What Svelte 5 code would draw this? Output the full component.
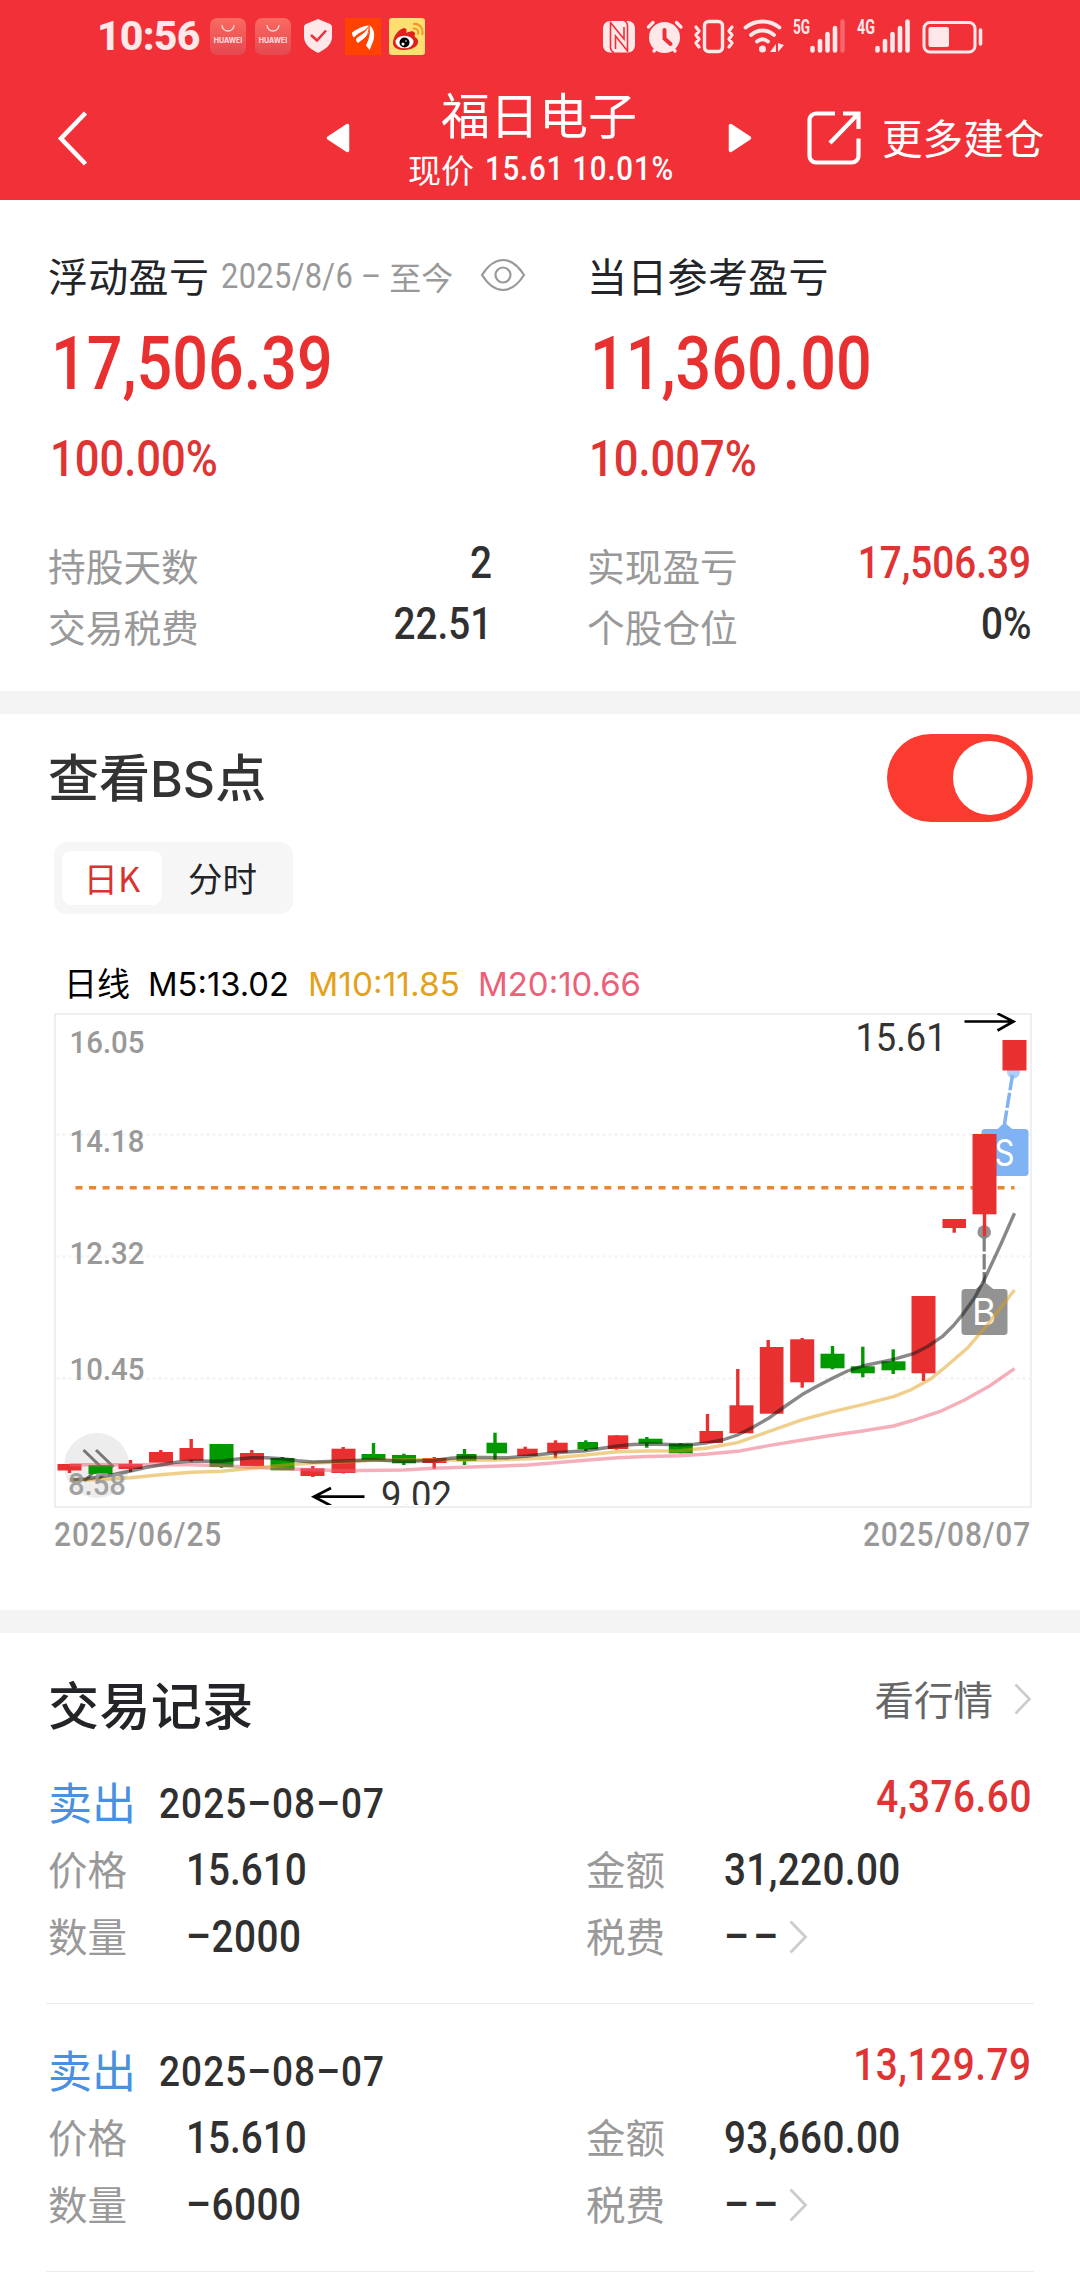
<script>
    let showPoints = true;
    let hidden = false;
    let tab = 'day';

    const left = [
        { label: '持股天数', value: '2' },
        { label: '交易税费', value: '22.51' }
    ];
    const right = [
        { label: '实现盈亏', value: '17,506.39', red: true },
        { label: '个股仓位', value: '0%' }
    ];

    const records = [
        { side: '卖出', date: '2025–08–07', total: '4,376.60', price: '15.610', amount: '31,220.00', count: '–2000' },
        { side: '卖出', date: '2025–08–07', total: '13,129.79', price: '15.610', amount: '93,660.00', count: '–6000' }
    ];

    // wick x, body x, body width, body top, body bottom, wick top, wick bottom, up
    const candles = [
        [69, 57, 24, 1464, 1470.5, 1464, 1473, 1],
        [99.7, 88, 24, 1465, 1474, 1465, 1474, 0],
        [130, 118, 24, 1464, 1469, 1460, 1472, 1],
        [160.3, 148.5, 24, 1452, 1462.7, 1450, 1462, 1],
        [190.7, 179, 24, 1448, 1460.7, 1439, 1461.7, 1],
        [221, 209, 24, 1444, 1467, 1444, 1468, 0],
        [251.3, 239.5, 24, 1453, 1466, 1450, 1466, 1],
        [281.7, 270, 24, 1458, 1470.3, 1457, 1470, 0],
        [312.3, 300, 24, 1468.3, 1476, 1466, 1477, 1],
        [342.7, 331, 24, 1448.7, 1473, 1447, 1473.5, 1],
        [373, 361, 24, 1454, 1460, 1443, 1460, 0],
        [403.3, 391.5, 24, 1455, 1463.3, 1453.7, 1465, 0],
        [433.7, 422, 24, 1458, 1463, 1457, 1468.7, 1],
        [464, 456, 20, 1454, 1461, 1449, 1465, 0],
        [494.5, 486, 20.5, 1442.7, 1453.3, 1432.7, 1460, 0],
        [524.7, 516.7, 20.5, 1448.7, 1456, 1446.7, 1456, 1],
        [555, 546.7, 20.5, 1442.7, 1452.7, 1440.3, 1458, 1],
        [585.3, 577, 20.5, 1442, 1449.3, 1440.3, 1451, 0],
        [616, 607.3, 20.5, 1435.3, 1449, 1435.3, 1449.7, 1],
        [646.3, 638, 24, 1438.7, 1443.7, 1437, 1447.7, 0],
        [680, 668.3, 24, 1443.7, 1453.3, 1443, 1453.3, 0],
        [707, 699, 23.5, 1431, 1443, 1414, 1443, 1],
        [737.3, 729, 24, 1405.3, 1433.3, 1369, 1433, 1],
        [767.7, 759.3, 23.7, 1347, 1413.7, 1340, 1413, 1],
        [801.7, 789.7, 24, 1339.3, 1382.3, 1338, 1387.7, 1],
        [832, 820, 24, 1353.7, 1368.3, 1346, 1369.3, 0],
        [862.3, 850.3, 24, 1366.3, 1373.3, 1346.7, 1377.3, 0],
        [892.7, 881, 24, 1361.3, 1370.3, 1349.3, 1374, 0],
        [923, 911, 24, 1296, 1373.3, 1296, 1381, 1],
        [953.7, 942, 23.5, 1219, 1228, 1219, 1232.7, 1],
        [984, 972, 24, 1134, 1214.3, 1134, 1236, 1],
        [1014, 1002, 24, 1040, 1070.5, 1040, 1070, 1]
    ];

    const averages = [
        { color: '#ec6078', points: '69,1464.7 160,1464.7 191,1464.7 221,1465.7 251,1467.3 282,1468.7 312,1469.7 343,1470.7 403,1470 433,1468.3 494,1466.3 527,1465 555,1462.7 585,1460.3 617,1457.7 646,1456.5 680,1455.7 707,1454 737,1451.3 768,1445.7 802,1440 832,1435.3 862,1431 893,1426 912,1420.5 930,1414.7 939,1411.7 964,1400 989,1386 1014,1368.7' },
        { color: '#e0a018', points: '69,1480 100,1479.5 130,1477.7 160,1474.7 191,1472.3 221,1471.3 251,1468.3 282,1465.3 312,1463 343,1462 373,1460.3 403,1460 433,1459.7 463,1460.3 494,1460 527,1458.7 555,1457.7 585,1455 617,1451.7 646,1451 680,1450.7 707,1448 737,1442.7 768,1431.7 802,1419.7 832,1411.7 862,1404.7 893,1396.7 910,1390 930,1379 941.7,1369.7 966.7,1348.3 986.7,1325 1014,1290' },
        { color: '#111', points: '70,1480 85,1479 100,1476.7 111,1475 130,1471 145,1467.5 160,1465 176,1462.2 191,1461 221,1461.3 237,1459 251,1457.7 265,1457.7 282,1458.7 297,1460.7 312,1462 343,1461 373,1459.7 403,1461.3 433,1460.5 450,1458.3 463,1457.3 507,1457.7 527,1456 555,1452.7 585,1450.7 617,1446 632,1444.5 646,1444 680,1444.7 694,1444.2 707,1442.7 722,1440 737,1435 752,1427.5 768,1418.3 785,1406 802,1394.3 817,1386 832,1378.3 847,1371 862,1366 893,1359.3 913,1353.7 927,1346.5 941.7,1336.7 953,1325.5 963,1313.3 974,1298 984,1279.3 1000,1245 1014,1213.3' }
    ];

    const scale = [
        { y: 1053, text: '16.05' },
        { y: 1152, text: '14.18' },
        { y: 1264, text: '12.32' },
        { y: 1380, text: '10.45' }
    ];
</script>

<div class="page">
    <header>
        <div class="status">
            <b class="clock">10:56</b>
            <span class="shop"><svg width="14" height="8" viewBox="0 0 14 8"><path d="M1 0a6 6 0 0 0 12 0" fill="none" stroke="#ffd9d0" stroke-width="1.3"/></svg><i>HUAWEI</i></span>
            <span class="shop second"><svg width="14" height="8" viewBox="0 0 14 8"><path d="M1 0a6 6 0 0 0 12 0" fill="none" stroke="#ffd9d0" stroke-width="1.3"/></svg><i>HUAWEI</i></span>
            <svg class="shield" width="28" height="34" viewBox="0 0 28 34"><path d="M14 0 26 5Q28 6 28 8v10c0 8-8 13-14 16C8 31 0 26 0 18V8Q0 6 2 5Z" fill="#ffe8ea"/><path d="m7 16 6 5.500 9-10" fill="none" stroke="#f03038" stroke-width="2.600"/></svg>
            <svg class="east" width="36" height="37" viewBox="0 0 36 37"><path fill="#ff4200" d="M0 0h36v37H0z"/><path fill="#fff" d="M7 14.500C12 11 17 8 24 7.500c-2 3-4 4.500-6 5.500-3 1.500-6 3-9 6.500-1.500-1-2-3-2-5Z"/><path fill="#fff" d="M11 21c4-4 10-6 13-13 2 7-3 11-7 14l-4 3c-1-1-2-2-2-4Z"/><path fill="#fff" d="M24.500 7c5 4 6 11 3 18l-3 7-3.500-4.500C24 21 26 15 24.500 7Z"/><path d="M24 8c0 7-2 11-6 15" fill="none" stroke="#ff4200" stroke-width="1"/></svg>
            <svg class="weibo" width="36" height="37" viewBox="0 0 36 37"><rect width="36" height="37" rx="3" fill="#ffdf72"/><path d="M4 25c0-7 6-14 11-15 3 0 3 3 2 5 4-2 9-3 9 1 0 1-1 2 0 3 6 3 4 13-12 13-6 0-10-3-10-7Z" fill="#e0201c"/><ellipse cx="15.500" cy="24" rx="9" ry="6.300" fill="#fff"/><circle cx="15.500" cy="24.500" r="5" fill="#000"/><circle cx="14" cy="26" r="1.500" fill="#fff"/><circle cx="17" cy="23" r=".8" fill="#fff"/><path d="M24 10.500c4-.6 6 2 5 6M24 6c7-1 11 5 9 11" fill="none" stroke="#ef9a28" stroke-width="2"/></svg>
            <!-- right side of the status bar, one shared coordinate space -->
            <svg class="system" width="384" height="40" viewBox="602 16 384 40" fill="none" stroke="#ffe8ea" stroke-linecap="round">
                <rect x="604" y="21" width="32" height="31.500" rx="7" fill="#ffe8ea" stroke="none"/>
                <g stroke="#f03038" stroke-width="1.600" stroke-linecap="butt">
                    <path d="M611.500 21.500V47q0 4 3.500 5.500M611.500 22.500 625 39V27"/>
                    <path d="M628.500 52V26q0-4-3.500-5.500M628.500 51 616.500 36v13"/>
                </g>
                <circle cx="665.500" cy="37.500" r="15.500" fill="#ffe8ea" stroke="none"/>
                <path d="m649.500 27 4.500-4.500M682 27l-4.500-4.500M655 51l3-3M676 51l-3-3" stroke-width="3.300"/>
                <path d="M665.500 30v8.500l6 5.500" stroke="#f03038" stroke-width="4"/>
                <rect x="705.500" y="21.500" width="18" height="30" rx="4" stroke-width="3.400"/>
                <path d="m697 27 3 4-3 4 3 4-3 4 3 4M733 27l-3 4 3 4-3 4 3 4-3 4" stroke-width="3.200" stroke-linejoin="round"/>
                <path d="M746.500 27.500c10-8 24-8 34 0M752 35c7-6 16-6 23 0M758 41.500c3.500-2.800 7.500-2.800 11 0" stroke-width="3.800"/>
                <circle cx="763.500" cy="49" r="3.500" fill="#ffe8ea" stroke="none"/>
                <path d="M777 44v8h-6Zm2-1v9l6-7Z" fill="#ffe8ea" stroke="none"/>
                <path d="M813.500 48v2.500M821 41v9.500M828.500 34v16.500M836 28v22.500" stroke-width="4.600"/>
                <path d="M843.500 21.500v29" stroke-width="4.400" opacity=".3"/>
                <path d="M878.500 48v2.500M886 41v9.500M893.500 34v16.500M901 28v22.500M908.500 21.500v29" stroke-width="4.600"/>
                <rect x="925" y="22.500" width="51" height="29.500" rx="6" stroke-width="3"/>
                <rect x="929.500" y="27" width="20.500" height="20" rx="2" fill="#ffe8ea" stroke="none"/>
                <path d="M981.500 30v14" stroke-width="3.600"/>
                <text x="794" y="33.500" textLength="17" lengthAdjust="spacingAndGlyphs">5G</text>
                <text x="858" y="33.500" textLength="18" lengthAdjust="spacingAndGlyphs">4G</text>
            </svg>
        </div>
        <nav>
            <svg class="back" width="32" height="56" viewBox="0 0 32 56"><path d="M28.500 3 4 28.500 28.500 54" fill="none" stroke="#fff" stroke-width="4.600"/></svg>
            <svg class="prev" width="24" height="30" viewBox="0 0 24 30"><path d="M21.500 2.500v25L2.500 15Z" fill="#fff" stroke="#fff" stroke-width="3.500" stroke-linejoin="round"/></svg>
            <div class="stock">
                <h1>福日电子</h1>
                <p><span>现价</span><span class="num">15.61 10.01%</span></p>
            </div>
            <svg width="24" height="30" viewBox="0 0 24 30"><path d="M2.500 2.500v25l19-12.500Z" fill="#fff" stroke="#fff" stroke-width="3.500" stroke-linejoin="round"/></svg>
            <svg class="share" width="54" height="56" viewBox="0 0 54 56" fill="none" stroke="#fff" stroke-width="4.200"><path d="M28 3.500H9a6.500 6.500 0 0 0-6.500 6.500v36A6.500 6.500 0 0 0 9 52.500h36a6.500 6.500 0 0 0 6.500-6.500V28.500M36 3.500h15.500v15.500M51 4 23 33"/></svg>
            <span class="more">更多建仓</span>
        </nav>
    </header>

    <section class="summary">
        <div class="col">
            <h2>浮动盈亏 <span class="num since">2025/8/6 –</span><small>至今</small>
                <svg on:click={() => hidden = !hidden} role="presentation" width="46" height="34" viewBox="0 0 46 34" fill="none" stroke="#999" stroke-width="2.200"><path d="M2 17C9 6 16 2 23 2s14 4 21 15C37 28 30 32 23 32S9 28 2 17Z"/><circle cx="23" cy="17" r="7.500"/></svg>
            </h2>
            <div class="big"><span class="num">{hidden ? '****' : '17,506.39'}</span></div>
            <div class="rate"><span class="num">100.00%</span></div>
            {#each left as row}
                <div class="row"><span>{row.label}</span><span class="num value">{row.value}</span></div>
            {/each}
        </div>
        <div class="col">
            <h2>当日参考盈亏</h2>
            <div class="big"><span class="num">{hidden ? '****' : '11,360.00'}</span></div>
            <div class="rate"><span class="num">10.007%</span></div>
            {#each right as row}
                <div class="row"><span>{row.label}</span><span class="num value" class:red={row.red}>{row.value}</span></div>
            {/each}
        </div>
    </section>

    <section class="points">
        <div class="head">
            <h3>查看<span>BS</span>点</h3>
            <button class="toggle" class:off={!showPoints} on:click={() => showPoints = !showPoints} aria-label="BS"><i></i></button>
        </div>
        <div class="tabs">
            <button class:active={tab == 'day'} on:click={() => tab = 'day'}>日K</button>
            <button class:active={tab == 'time'} on:click={() => tab = 'time'}>分时</button>
        </div>
        <svg class="legend" width="620" height="56" viewBox="54 953 620 56">
            <text x="64" y="996" class="cn">日线</text>
            <text x="148" y="996" textLength="141" lengthAdjust="spacingAndGlyphs">M5:13.02</text>
            <text x="308" y="996" textLength="152" lengthAdjust="spacingAndGlyphs" fill="#e3a21a">M10:11.85</text>
            <text x="478" y="996" textLength="163" lengthAdjust="spacingAndGlyphs" fill="#ec6078">M20:10.66</text>
        </svg>
        <svg class="chart" width="979" height="495" viewBox="53.500 1013 979 495">
            <rect x="54.500" y="1014" width="976" height="493" fill="#fff" stroke="#e8e8e8" stroke-width="1.400"/>
            {#each [1134.5, 1256.5, 1378.5] as y}
                <path d="M56 {y}H1030" stroke="#f3f3f3" stroke-width="2.500" stroke-dasharray="3 3"/>
            {/each}
            <path d="M75 1187.700H1014" stroke="#ea8530" stroke-width="3.400" stroke-dasharray="7 6.560"/>
            <circle cx="96.300" cy="1465.500" r="32.500" fill="#ededed"/>
            <path d="m83 1450 16.500 16L84 1481M95.500 1450l16.500 16-16 15" fill="none" stroke="#777" stroke-width="3"/>
            {#each scale as s}
                <text x="69" y={s.y} textLength="75" lengthAdjust="spacingAndGlyphs" class="axis">{s.text}</text>
            {/each}
            {#if showPoints}
                <g fill="#7fb3f3">
                    <circle cx="1013" cy="1072" r="6.500" opacity=".65"/>
                    <path d="m1012 1075-8 49" stroke="#7fb3f3" stroke-width="3.500" stroke-dasharray="15.500 2.500"/>
                    <path d="m996 1130 8-7.500 9 7.500Z"/>
                    <rect x="981" y="1129" width="47" height="47" rx="3.500"/>
                </g>
                <g fill="#939393">
                    <circle cx="983.700" cy="1232" r="6.800"/>
                    <path d="M983.700 1236v50" stroke="#808080" stroke-width="3.200" stroke-dasharray="15.500 2.500"/>
                    <path d="m974 1290 10-8 10 8Z"/>
                    <rect x="961" y="1289" width="46" height="46" rx="3.500"/>
                </g>
                <text x="1004" y="1165.500" textLength="20" lengthAdjust="spacingAndGlyphs" class="mark">S</text>
                <text x="983.500" y="1325" textLength="24" lengthAdjust="spacingAndGlyphs" class="mark">B</text>
            {/if}
            {#each candles as [x, bx, w, top, bottom, high, low, up]}
                <rect x={x - 1.7} y={high} width="3.400" height={low - high} fill={up ? '#e83030' : '#009900'}/>
                <rect x={bx} y={top} width={w} height={bottom - top} fill={up ? '#e83030' : '#009900'}/>
            {/each}
            {#each averages as line}
                <polyline points={line.points} fill="none" stroke={line.color} stroke-width="3.400" stroke-linejoin="round" opacity=".5"/>
            {/each}
            <text x="67.500" y="1494.500" textLength="58" lengthAdjust="spacingAndGlyphs" class="axis" opacity=".9">8.58</text>
            <text x="855" y="1051" textLength="91" lengthAdjust="spacingAndGlyphs" class="peak">15.61</text>
            <path d="M964 1021.500h48M997 1013.500l16 8-16 9" fill="none" stroke="#000" stroke-width="2.600"/>
            <svg x="300" y="1470" width="160" height="35" viewBox="300 1470 160 35">
                <text x="380.500" y="1509" textLength="71" lengthAdjust="spacingAndGlyphs" class="peak">9.02</text>
                <path d="M314 1496.700h50M330.500 1488l-17 8.700 17 9" fill="none" stroke="#000" stroke-width="2.800"/>
            </svg>
        </svg>
        <div class="dates"><span class="num">2025/06/25</span><span class="num end">2025/08/07</span></div>
    </section>

    <section class="records">
        <div class="head">
            <h3>交易记录</h3>
            <a href="#quote">看行情<svg width="18" height="32" viewBox="0 0 18 32"><path d="m1.500 1.500 14 14.500-14 14.500" fill="none" stroke="#ccc" stroke-width="2.600"/></svg></a>
        </div>
        {#each records as r}
            <article>
                <div class="line first">
                    <span class="side">{r.side}</span>
                    <span class="num date">{r.date}</span>
                    <span class="num total">{r.total}</span>
                </div>
                <div class="line">
                    <label>价格</label><span class="num">{r.price}</span>
                    <label>金额</label><span class="num">{r.amount}</span>
                </div>
                <div class="line">
                    <label>数量</label><span class="num count">{r.count}</span>
                    <label>税费</label><span class="num fee">––</span>
                    <svg width="19" height="34" viewBox="0 0 19 34"><path d="m1.500 1.500 15 15.500-15 15.500" fill="none" stroke="#ccc" stroke-width="2.800"/></svg>
                </div>
            </article>
        {/each}
    </section>
</div>

<style>
    :global(body){
        margin: 0;
        background: #fff;
    }
    .page{
        width: 1080px;
        height: 2280px;
        overflow: hidden;
        background: #fff;
        color: #222428;
        font-family: "Noto Sans CJK SC", sans-serif;
    }
    h1, h2, h3, p{
        margin: 0;
        font-weight: 400;
    }
    svg{
        display: block;
        flex: none;
    }
    button{
        border: none;
        padding: 0;
        background: none;
        font-family: inherit;
    }
    /* narrow figures */
    .num{
        display: inline-block;
        font-family: Roboto, "Noto Sans CJK SC", sans-serif;
        font-weight: 500;
        white-space: nowrap;
        transform: scaleX(0.88);
        transform-origin: left center;
    }
    header{
        height: 200px;
        background: #f13038;
        color: #fff;
    }
    .status{
        display: flex;
        align-items: center;
        height: 72px;
        padding-left: 97px;
    }
    .clock{
        width: 113px;
        font: 800 41px/41px Roboto, sans-serif;
        color: #ffe8ea;
        letter-spacing: -0.8px;
    }
    .shop{
        display: flex;
        flex-direction: column;
        align-items: center;
        gap: 3px;
        width: 36px;
        height: 30px;
        padding-top: 7px;
        border-radius: 7px;
        background: linear-gradient(#fa6a62, #e5484f);
    }
    .shop.second{
        margin-left: 9px;
    }
    .shop i{
        font: 700 7px/9px Inter, sans-serif;
        color: #ffe0e0;
    }
    .shield{
        margin-left: 13px;
    }
    .east{
        margin-left: 13px;
    }
    .weibo{
        margin-left: 8px;
    }
    .system{
        margin-left: 176px;
    }
    .system text{
        font: 700 21px Roboto, sans-serif;
        fill: #ffe8ea;
        stroke: none;
    }
    nav{
        display: flex;
        align-items: center;
        height: 132px;
    }
    .back{
        margin-left: 57px;
    }
    .prev{
        margin-left: 237px;
    }
    .stock{
        flex: none;
        width: 378px;
        text-align: center;
    }
    h1{
        font-size: 49px;
        line-height: 62px;
    }
    .stock p{
        display: flex;
        width: 262px;
        margin: 0 auto;
        font-size: 33px;
        line-height: 50px;
        white-space: nowrap;
    }
    .stock p span:first-child{
        flex: none;
    }
    .stock .num{
        margin-left: 11px;
        font-size: 33.5px;
        letter-spacing: 0.9px;
    }
    .share{
        margin-left: 55px;
    }
    .more{
        margin-left: 21px;
        font-size: 40.6px;
        line-height: 60px;
        margin-top: -3px;
        white-space: nowrap;
    }
    .summary{
        display: flex;
        gap: 97px;
        height: 454px;
        padding: 37px 48px 0 48px;
        border-bottom: 23px solid #f4f4f4;
    }
    .col{
        width: 444px;
    }
    .col:last-child{
        margin-left: -2px;
    }
    h2{
        display: flex;
        align-items: center;
        height: 76px;
        padding-bottom: 2px;
        margin-bottom: -2px;
        font-size: 40px;
        letter-spacing: 0.3px;
        white-space: nowrap;
    }
    h2 .since{
        width: 168px;
        margin-left: 12px;
        padding-top: 3px;
        font-size: 35px;
        font-weight: 400;
        letter-spacing: 0.4px;
        color: #999;
    }
    h2 small{
        padding-top: 1px;
        font-size: 32px;
        letter-spacing: 0;
        color: #999;
    }
    h2 svg{
        margin-left: 27px;
    }
    .big{
        height: 100px;
        padding-left: 3px;
        font-size: 74px;
        line-height: 102px;
        color: #e83030;
    }
    .col .big .num{
        transform: scaleX(0.85);
    }
    .rate{
        height: 90px;
        padding-left: 2px;
        font-size: 50px;
        line-height: 92px;
        color: #e03434;
    }
    .big .num, .rate .num{
        display: block;
    }
    .rate .num{
        transform: scaleX(0.87);
    }
    .row{
        display: flex;
        justify-content: space-between;
        height: 61px;
        font-size: 37.7px;
        line-height: 58px;
        color: #999;
    }
    .rate + .row{
        margin-top: 33px;
    }
    .row .value{
        font-size: 44px;
        line-height: 54px;
        color: #303030;
        transform-origin: right center;
    }
    .row .red{
        color: #e03434;
    }
    .points{
        height: 896px;
        padding: 0 48px 0 48px;
        border-bottom: 23px solid #f4f4f4;
    }
    .head{
        display: flex;
        align-items: center;
        justify-content: space-between;
    }
    .points .head{
        height: 128px;
    }
    h3{
        font-size: 51px;
        line-height: 60px;
        font-weight: 500;
    }
    .points h3{
        padding-bottom: 2px;
        color: #333;
    }
    .points h3 span{
        font-family: Inter, sans-serif;
        font-size: 50px;
        font-weight: 500;
    }
    .toggle{
        display: flex;
        box-sizing: border-box;
        width: 146px;
        height: 88px;
        margin-right: -1px;
        padding: 7px 6px;
        justify-content: flex-end;
        border-radius: 44px;
        background: #fb3b30;
    }
    .toggle.off{
        justify-content: flex-start;
        background: #ccc;
    }
    .toggle i{
        width: 74px;
        height: 74px;
        border-radius: 50%;
        background: #fff;
    }
    .tabs{
        display: flex;
        box-sizing: border-box;
        width: 239px;
        height: 72px;
        margin-left: 6px;
        padding: 9px 8px;
        border-radius: 13px;
        background: #f6f6f6;
    }
    .tabs button{
        width: 100px;
        height: 54px;
        border-radius: 9px;
        padding-bottom: 3px;
        font-size: 34.5px;
        line-height: 50px;
        color: #222428;
    }
    .tabs button + button{
        width: 121px;
    }
    .tabs .active{
        background: #fff;
        color: #d8342f;
    }
    .legend{
        margin: 39px 0 0 6px;
    }
    .legend text{
        font: 400 33px Inter, sans-serif;
    }
    .legend .cn{
        font: 400 33px "Noto Sans CJK SC", sans-serif;
    }
    .chart{
        margin: 4px 0 0 5.5px;
    }
    .axis{
        font: 500 31px Roboto, sans-serif;
        fill: #999;
    }
    .peak{
        font: 400 39px Roboto, sans-serif;
        fill: #333;
    }
    .mark{
        font: 400 37px Inter, sans-serif;
        fill: #fff;
        text-anchor: middle;
    }
    .dates{
        display: flex;
        justify-content: space-between;
        padding: 0 1px 0 6px;
        font-size: 34px;
        line-height: 52px;
        letter-spacing: 1px;
        color: #999;
    }
    .dates .end{
        transform-origin: right center;
    }
    .records{
        padding: 0 46px;
    }
    .records .head{
        height: 103px;
        padding: 0 2px;
    }
    .records h3{
        padding-top: 36px;
        letter-spacing: 0.4px;
    }
    .records a{
        display: flex;
        align-items: center;
        gap: 21px;
        padding-top: 26px;
        font-size: 39.5px;
        line-height: 60px;
        color: #666;
        text-decoration: none;
    }
    .records a svg{
        margin-top: 2px;
    }
    article{
        height: 235px;
        padding: 32px 2px 0;
        border-bottom: 1px solid #ebebeb;
    }
    .line{
        display: flex;
        align-items: center;
        height: 67px;
        font-size: 44px;
        line-height: 60px;
        color: #303030;
    }
    .line.first{
        height: 68px;
    }
    .side{
        margin-top: -3px;
        color: #4a90e2;
    }
    .date{
        margin-left: 23px;
        margin-top: 3px;
        font-size: 42px;
        letter-spacing: 1.2px;
    }
    .total{
        margin-left: auto;
        margin-top: -11px;
        color: #e03434;
        letter-spacing: 0.6px;
        transform-origin: right center;
    }
    label{
        width: 138px;
        margin-top: -4px;
        font-size: 39.5px;
        color: #999;
    }
    .line .num{
        flex: none;
    }
    .count{
        letter-spacing: 0.6px;
    }
    label + .num{
        width: 400px;
    }
    label + .num ~ label + .num{
        width: 200px;
        letter-spacing: 0.4px;
    }
    .line label + .fee.num.num{
        width: 65px;
        letter-spacing: 5px;
    }
</style>
